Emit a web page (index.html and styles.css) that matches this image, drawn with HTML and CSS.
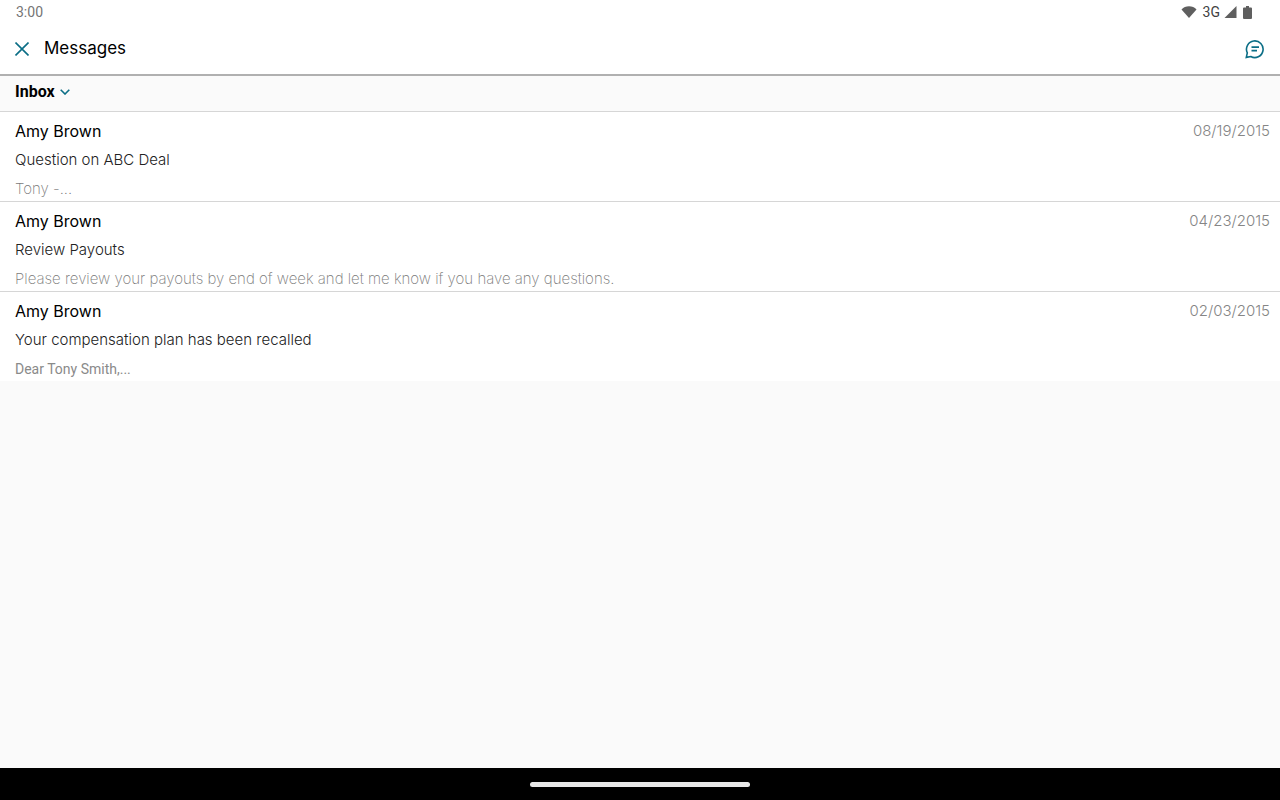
FILE: index.html
```html
<!DOCTYPE html>
<html lang="en">
<head>
    <meta charset="UTF-8">
    <meta name="viewport" content="width=device-width, initial-scale=1.0">
    <title>Messages</title>
    <link rel="stylesheet" href="styles.css">
</head>
<body>
    <!-- Status bar -->
    <div class="status-bar">
        <span class="clock">3:00</span>
        <div class="status-icons">
            <svg width="16" height="12" viewBox="0 0 16 12"><path d="M0.5 3.4C2.5 1.4 5 0.3 8 0.3s5.500 1.100 7.500 3.100L8 12z"/></svg>
            <span class="network">3G</span>
            <svg width="13" height="12" viewBox="0 0 13 12"><path d="M12.500 0v12H0.500z"/></svg>
            <svg class="battery" width="9" height="13" viewBox="0 0 9 13"><path d="M3 0h3v1.500h2a1 1 0 0 1 1 1V12a1 1 0 0 1-1 1H1a1 1 0 0 1-1-1V2.500a1 1 0 0 1 1-1h2z"/></svg>
        </div>
    </div>

    <header class="header">
        <button class="icon-button" type="button" aria-label="Close">
            <svg width="14" height="14" viewBox="0 0 14 14"><path d="M0.500 0.500l13 13M13.500 0.500l-13 13"/></svg>
        </button>
        <h1 class="title">Messages</h1>
        <button class="icon-button" type="button" aria-label="New message">
            <svg width="20" height="20" viewBox="0 0 20 20"><path d="M1.300 18.400L2.300 13.800A8.300 8.300 0 1 1 5.800 17.500z M6.500 8.100h7.500M6.500 11.600h5.500"/></svg>
        </button>
    </header>

    <div class="folder-bar">
        <select class="folder" aria-label="Folder">
            <option>Inbox</option>
        </select>
        <svg class="chevron" width="10" height="6" viewBox="0 0 10 6"><path d="M0.700 0.700L5 5l4.300-4.300"/></svg>
    </div>

    <!-- Message list -->
    <main class="content">
        <ul class="messages">
            <li class="message">
                <div class="message-top">
                    <h2 class="sender">Amy Brown</h2>
                    <time class="date">08/19/2015</time>
                </div>
                <p class="subject">Question on ABC Deal</p>
                <p class="preview">Tony -...</p>
            </li>
            <li class="message">
                <div class="message-top">
                    <h2 class="sender">Amy Brown</h2>
                    <time class="date">04/23/2015</time>
                </div>
                <p class="subject">Review Payouts</p>
                <p class="preview">Please review your payouts by end of week and let me know if you have any questions.</p>
            </li>
            <li class="message">
                <div class="message-top">
                    <h2 class="sender">Amy Brown</h2>
                    <time class="date">02/03/2015</time>
                </div>
                <p class="subject">Your compensation plan has been recalled</p>
                <p class="preview preview-plain">Dear Tony Smith,...</p>
            </li>
        </ul>
    </main>

    <div class="nav-bar">
        <div class="nav-handle"></div>
    </div>
</body>
</html>
```
FILE: styles.css
```css
body {
    font-family: Inter, sans-serif;
    margin: 0;
    min-height: 100vh;
    display: flex;
    flex-direction: column;
    background-color: #fafafa;
    color: #000;
}
h1, h2, p, ul {
    margin: 0;
    padding: 0;
}
.status-bar {
    display: flex;
    justify-content: space-between;
    align-items: center;
    height: 24px;
    padding: 0 28px 0 16px;
    background-color: #fff;
    font-family: Roboto, sans-serif;
    font-size: 14px;
}
.clock {
    color: #757575;
}
.status-icons {
    display: flex;
    align-items: center;
    gap: 4px;
    fill: #5f5f5f;
}
.network {
    margin-left: 2px;
    color: #424242;
}
.battery {
    margin-left: 2px;
}
.header {
    display: flex;
    align-items: center;
    height: 50px;
    padding: 0 15px;
    background-color: #fff;
    border-bottom: 2px solid #b0b0b0;
}
.title {
    flex: 1;
    margin-left: 15px;
    padding-bottom: 2px;
    font-size: 17px;
    font-weight: 400;
    line-height: 24px;
}
.icon-button {
    display: flex;
    padding: 0;
    border: none;
    background: none;
    cursor: pointer;
}
.icon-button svg,
.chevron {
    fill: none;
    stroke: #0b6e86;
    stroke-width: 1.6;
}
.folder-bar {
    display: flex;
    align-items: center;
    gap: 5px;
    height: 31px;
    padding: 0 15px 4px;
    border-bottom: 1px solid #d6d6d6;
}
.folder {
    appearance: none;
    field-sizing: content;
    padding: 0;
    border: none;
    background: none;
    color: #000;
    font-family: Roboto, sans-serif;
    font-size: 16px;
    font-weight: 700;
    cursor: pointer;
}
.content {
    flex: 1;
}
.messages {
    list-style: none;
    background-color: #fff;
}
.message {
    display: flex;
    flex-direction: column;
    gap: 5px;
    padding: 7px 10px 0 15px;
    font-size: 15px;
    font-weight: 300;
    line-height: 24px;
}
.message + .message {
    border-top: 1px solid #d6d6d6;
}
.message-top {
    display: flex;
    justify-content: space-between;
}
.sender {
    font-size: 16px;
    font-weight: 400;
}
.date {
    color: #858585;
}
.subject {
    color: #222;
}
.preview {
    color: #7a7a7a;
    font-weight: 200;
}
.preview-plain {
    color: #8a8a8a;
    font-family: Roboto, sans-serif;
    font-size: 14px;
    font-weight: 400;
}
.nav-bar {
    display: flex;
    justify-content: center;
    align-items: center;
    height: 32px;
    background-color: #000;
}
.nav-handle {
    width: 220px;
    height: 5px;
    border-radius: 3px;
    background-color: #e8e8e8;
}
```
